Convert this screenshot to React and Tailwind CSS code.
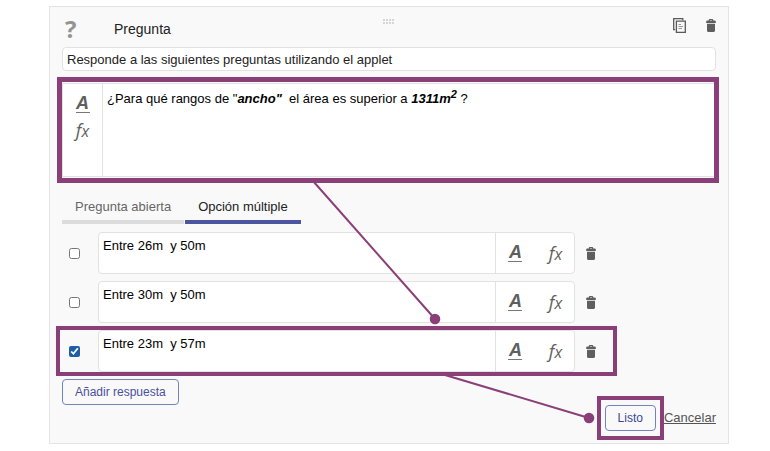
import { useState } from 'react';

const TrashIcon = () => (
  <svg width="10" height="13" viewBox="0 0 10 13" fill="#5f5f5f" aria-hidden="true">
    <path d="M2.8 1.6V1a1 1 0 0 1 1-1h2.4a1 1 0 0 1 1 1v.6h1.6a1 1 0 0 1 1 1V4H.2V2.6a1 1 0 0 1 1-1h1.6Zm1.2-.6v.6h2V1H4Z" />
    <path d="M1 4.7h8v6.7A1.6 1.6 0 0 1 7.4 13H2.6A1.6 1.6 0 0 1 1 11.400V4.7Z" />
  </svg>
);

const CopyIcon = () => (
  <svg width="13" height="15" viewBox="0 0 13 15" fill="none" stroke="#5a5a5a" aria-hidden="true">
    <path d="M2.2 11.6H.7V.7h9.1v1.5" strokeWidth="1.3" />
    <path d="M3.4 3.1h8.9v11.2H3.4z" strokeWidth="1.3" />
    <path d="M5.5 6.5h2.5M5.5 8.5h4.5M5.5 10.5h3.5" stroke="#8a8a8a" strokeWidth="0.9" />
  </svg>
);

const DragHandle = () => (
  <svg width="12" height="5" viewBox="0 0 12 5" fill="#d6d6d6" aria-hidden="true">
    {[0, 3, 6, 9].map((x) => (
      <g key={x}>
        <rect x={x} y="0" width="2" height="2" />
        <rect x={x} y="3" width="2" height="2" />
      </g>
    ))}
  </svg>
);

const FormatButton = () => (
  <button type="button" aria-label="Formato de texto" className="flex w-[26px] justify-center">
    <span className="w-[14px] border-b border-[#777] text-center text-[18px] leading-[17px] font-bold text-[#5f5f5f] italic">
      A
    </span>
  </button>
);

const FormulaButton = () => (
  <button
    type="button"
    aria-label="Fórmula"
    className="flex w-[26px] items-baseline justify-center font-['Open_Sans'] leading-[18px] font-medium text-[#5f5f5f] italic"
  >
    <span className="text-[18px]">f</span>
    <span className="text-[16px]">x</span>
  </button>
);

const AnswerRow = ({ answer, onToggle, onChange }) => (
  <li className="relative flex items-center">
    <div className="flex w-9 pl-[7px]">
      <input
        type="checkbox"
        aria-label={`Respuesta ${answer.text}`}
        checked={answer.checked}
        onChange={onToggle}
        className="size-[11px] accent-[#1f5fa8]"
      />
    </div>
    <div className="flex h-[42px] w-[73%] overflow-hidden rounded border border-[#e2e2e2] bg-white">
      <textarea
        aria-label="Texto de la respuesta"
        value={answer.text}
        onChange={(e) => onChange(e.target.value)}
        className="min-w-0 flex-1 resize-none px-1 pt-[5px] leading-4 text-black outline-none"
      />
      <div className="flex items-center gap-[14px] border-l border-[#e2e2e2] px-[6px]">
        <FormatButton />
        <FormulaButton />
      </div>
    </div>
    <button type="button" aria-label="Eliminar respuesta" className="ml-[11px]">
      <TrashIcon />
    </button>
    {answer.checked && (
      <div className="pointer-events-none absolute -top-1 right-[99px] -bottom-1 -left-[6px] border-4 border-[#8b3f78]" />
    )}
  </li>
);

const App = () => {
  const [title, setTitle] = useState('Responde a las siguientes preguntas utilizando el applet');
  const [tab, setTab] = useState('multiple');
  const [answers, setAnswers] = useState([
    { id: 1, text: 'Entre 26m  y 50m', checked: false },
    { id: 2, text: 'Entre 30m  y 50m', checked: false },
    { id: 3, text: 'Entre 23m  y 57m', checked: true },
  ]);

  const updateAnswer = (id, changes) => {
    setAnswers(answers.map((a) => (a.id === id ? { ...a, ...changes } : a)));
  };

  const tabClass = (name) =>
    name === tab
      ? 'border-b-4 border-[#4c55a0] px-[13px] pt-1 text-[#222]'
      : 'border-b-4 border-[#dcdcdc] px-[13px] pt-1 text-[#666]';

  return (
    <div className="min-h-screen bg-white pt-[6px] pr-[41px] pl-[49px] font-['Liberation_Sans',sans-serif] text-[13px]">
      <main className="relative border border-[#e4e4e4] bg-[#f9f9f9] px-3 pb-3">
        {/* Header */}
        <header className="relative flex h-10 items-center justify-between">
          <div className="flex items-center pt-1">
            <span className="w-[52px] pl-[3px] font-['Open_Sans'] text-[24px] leading-6 font-bold text-[#939393]">?</span>
            <h1 className="text-[14px] text-[#222]">Pregunta</h1>
          </div>
          <div className="absolute top-3 left-1/2 -translate-x-1/2">
            <DragHandle />
          </div>
          <div className="flex items-center gap-5 pb-1">
            <button type="button" aria-label="Duplicar">
              <CopyIcon />
            </button>
            <button type="button" aria-label="Eliminar">
              <TrashIcon />
            </button>
          </div>
        </header>

        <input
          type="text"
          aria-label="Título"
          value={title}
          onChange={(e) => setTitle(e.target.value)}
          className="block h-6 w-full rounded border border-[#e2e2e2] bg-white px-1 text-[#222] outline-none"
        />

        {/* Question editor */}
        <section className="relative mt-3 flex h-[94px] border border-[#e2e2e2] bg-white">
          <div className="flex w-10 flex-col items-center gap-2 border-r border-[#e2e2e2] pt-[11px]">
            <FormatButton />
            <FormulaButton />
          </div>
          <div
            role="textbox"
            aria-label="Pregunta"
            contentEditable
            suppressContentEditableWarning
            className="flex-1 px-1 pt-[5px] leading-5 text-black outline-none"
          >
            ¿Para qué rangos de "<b><i>ancho"</i></b>&nbsp; el área es superior a{' '}
            <b>
              <i>
                1311m<sup className="text-[11px]">2</sup>
              </i>
            </b>{' '}
            ?
          </div>
          <div className="pointer-events-none absolute -top-[7px] -right-1 -bottom-[7px] -left-[6px] border-5 border-[#8b3f78]" />
        </section>

        {/* Answer type */}
        <div role="tablist" className="mt-3 flex h-[35px] gap-px">
          <button type="button" role="tab" aria-selected={tab === 'abierta'} onClick={() => setTab('abierta')} className={tabClass('abierta')}>
            Pregunta abierta
          </button>
          <button type="button" role="tab" aria-selected={tab === 'multiple'} onClick={() => setTab('multiple')} className={tabClass('multiple')}>
            Opción múltiple
          </button>
        </div>

        <ul className="mt-2 flex flex-col gap-[7px]">
          {answers.map((answer) => (
            <AnswerRow
              key={answer.id}
              answer={answer}
              onToggle={() => updateAnswer(answer.id, { checked: !answer.checked })}
              onChange={(text) => updateAnswer(answer.id, { text })}
            />
          ))}
        </ul>

        <button type="button" className="mt-[7px] block h-[26px] rounded border border-[#7482bd] px-3 text-[12px] text-[#4a4fa0]">
          Añadir respuesta
        </button>

        <footer className="flex items-center justify-end gap-2">
          <div className="relative">
            <button type="button" className="h-[26px] rounded border border-[#7482bd] px-3 text-[12px] text-[#3c4596]">
              Listo
            </button>
            <div className="pointer-events-none absolute -inset-x-2 -inset-y-[9px] border-4 border-[#8b3f78]" />
          </div>
          <a href="#cancelar" className="text-[#555] underline">
            Cancelar
          </a>
        </footer>

        {/* Connectors between the highlighted areas */}
        <svg className="pointer-events-none absolute top-0 left-0" width="678" height="436" viewBox="50 7 678 436" aria-hidden="true">
          <g stroke="#8b3f78" strokeWidth="2" fill="#8b3f78">
            <path d="M313 181L435 319M445 375l144 43" />
            <circle cx="435" cy="319" r="4.3" />
            <circle cx="589" cy="418" r="4.3" />
          </g>
        </svg>
      </main>
    </div>
  );
};

export default App;
